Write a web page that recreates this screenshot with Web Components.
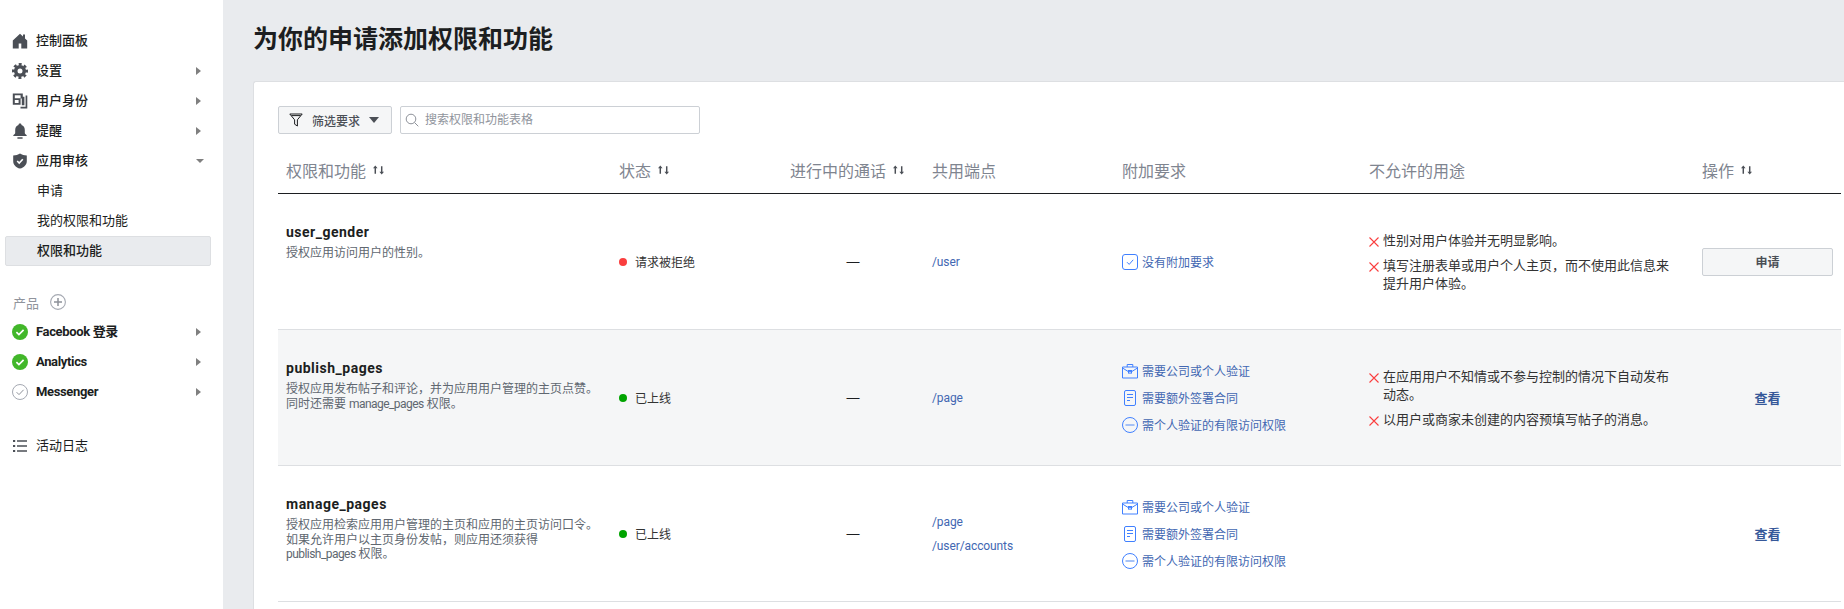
<!DOCTYPE html>
<html lang="zh">
<head>
<meta charset="utf-8">
<title>权限和功能</title>
<style>
    html, body {
        margin: 0;
        height: 100%;
        overflow: hidden;
        background: #e9ebee;
        color: #1c1e21;
        font-family: Roboto, "Noto Sans CJK SC", sans-serif;
    }
    body {
        display: flex;
    }
</style>
</head>
<body>
<app-sidebar>
    <nav-group>
        <nav-item icon="home" strong>控制面板</nav-item>
        <nav-item icon="gear" strong chevron="right">设置</nav-item>
        <nav-item icon="identity" strong chevron="right">用户身份</nav-item>
        <nav-item icon="bell" strong chevron="right">提醒</nav-item>
        <nav-item icon="shield" strong chevron="down">应用审核</nav-item>
        <nav-item sub>申请</nav-item>
        <nav-item sub>我的权限和功能</nav-item>
        <nav-item sub selected>权限和功能</nav-item>
    </nav-group>
    <nav-products></nav-products>
    <nav-group>
        <nav-item icon="okfill" strong tight chevron="right">Facebook 登录</nav-item>
        <nav-item icon="okfill" strong tight chevron="right">Analytics</nav-item>
        <nav-item icon="okline" strong tight chevron="right">Messenger</nav-item>
    </nav-group>
    <nav-group class="log">
        <nav-item icon="list">活动日志</nav-item>
    </nav-group>
</app-sidebar>
<app-main>
    <span slot="title">为你的申请添加权限和功能</span>
    <filter-bar></filter-bar>
    <perm-head></perm-head>
    <perm-row>
        <perm-info slot="info" name="user_gender">授权应用访问用户的性别。</perm-info>
        <status-dot slot="status" color="#fa3e3e">请求被拒绝</status-dot>
        <end-point slot="endpoints">/user</end-point>
        <req-item slot="reqs" icon="check">没有附加要求</req-item>
        <ban-item slot="bans">性别对用户体验并无明显影响。</ban-item>
        <ban-item slot="bans">填写注册表单或用户个人主页，而不使用此信息来提升用户体验。</ban-item>
        <action-button slot="action">申请</action-button>
    </perm-row>
    <perm-row shaded>
        <perm-info slot="info" name="publish_pages">授权应用发布帖子和评论，并为应用用户管理的主页点赞。<br>同时还需要 <perm-word>manage_pages</perm-word> 权限。</perm-info>
        <status-dot slot="status" color="#00a400">已上线</status-dot>
        <end-point slot="endpoints">/page</end-point>
        <req-item slot="reqs" icon="case">需要公司或个人验证</req-item>
        <req-item slot="reqs" icon="doc">需要额外签署合同</req-item>
        <req-item slot="reqs" icon="minus">需个人验证的有限访问权限</req-item>
        <ban-item slot="bans">在应用用户不知情或不参与控制的情况下自动发布动态。</ban-item>
        <ban-item slot="bans">以用户或商家未创建的内容预填写帖子的消息。</ban-item>
        <action-link slot="action">查看</action-link>
    </perm-row>
    <perm-row>
        <perm-info slot="info" name="manage_pages">授权应用检索应用用户管理的主页和应用的主页访问口令。如果允许用户以主页身份发帖，则应用还须获得<br><perm-word>publish_pages</perm-word> 权限。</perm-info>
        <status-dot slot="status" color="#00a400">已上线</status-dot>
        <end-point slot="endpoints">/page</end-point>
        <end-point slot="endpoints">/user/accounts</end-point>
        <req-item slot="reqs" icon="case">需要公司或个人验证</req-item>
        <req-item slot="reqs" icon="doc">需要额外签署合同</req-item>
        <req-item slot="reqs" icon="minus">需个人验证的有限访问权限</req-item>
        <action-link slot="action">查看</action-link>
    </perm-row>
</app-main>

<script>
const ICONS = {
    home: `<path fill="#4b4f56" d="M8 .8 .8 7.4V15.500h5.900v-5h2.600v5h5.900V7.400l-2.200-2V1.500h-2v2.100z"/>`,
    gear: `<circle cx="8" cy="8" r="4.3" fill="none" stroke="#4b4f56" stroke-width="3.6"/><circle cx="8" cy="8" r="6.7" fill="none" stroke="#4b4f56" stroke-width="2.6" stroke-dasharray="2.9 2.36" stroke-dashoffset="1.45"/>`,
    identity: `<path fill="#4b4f56" fill-rule="evenodd" d="M.8.5h10v3.300h1.600v8.400H9.800V5.600H8.600v6.200H.8zm2 1.700v3h5.800v-3zm0 4.800v3.100h3.800V7z"/><path fill="#4b4f56" d="M13.600 2.500h1.700v13H8.500v-1.700h5.100z"/>`,
    bell: `<path fill="#4b4f56" d="M8 .6c.9 0 1.400.5 1.500 1.300 2.100.6 3.300 2.500 3.300 5v3.200c0 .8.7 1.300 1.900 2.100v.9H1.300v-.9c1.200-.8 1.900-1.300 1.900-2.100V6.900c0-2.500 1.200-4.400 3.300-5C6.600 1.100 7.100.6 8 .6z"/><rect x="5.200" y="14.200" width="5.600" height="1.600" rx=".8" fill="#4b4f56"/>`,
    shield: `<path fill="#4b4f56" d="M8 .4c1.900 1.300 4.100 1.900 6.800 2v5.800c0 3.500-2.700 6.200-6.800 7.400-4.100-1.200-6.800-3.900-6.800-7.400V2.400C3.900 2.300 6.100 1.700 8 .4z"/><path fill="none" stroke="#fff" stroke-width="1.600" d="m5.200 8 2 2 3.600-3.800"/>`,
    okfill: `<circle cx="8" cy="8" r="8" fill="#42b72a"/><path fill="none" stroke="#fff" stroke-width="1.700" d="m4.400 8.200 2.500 2.400 4.700-4.800"/>`,
    okline: `<circle cx="8" cy="8" r="7.500" fill="none" stroke="#a5a9b2"/><path fill="none" stroke="#8d9199" d="m4.600 8.200 2.400 2.400 4.600-4.800"/>`,
    list: `<path fill="#4b4f56" d="M1 2h2.200v2H1zm4 .2h10v1.600H5zM1 7h2.200v2H1zm4 .2h10v1.600H5zM1 12h2.200v2H1zm4 .2h10v1.600H5z"/>`,
    plus: `<circle cx="8" cy="8" r="7.400" fill="none" stroke="#a5a9b2" stroke-width="1.100"/><path fill="none" stroke="#8d9199" stroke-width="1.500" d="M8 4v8M4 8h8"/>`,
    check: `<rect x=".5" y=".5" width="15" height="15" rx="2.500" fill="none" stroke="#4080ff"/><path fill="none" stroke="#4080ff" d="m5 8.200 2.200 2.200 4-4.600"/>`,
    case: `<path fill="none" stroke="#4080ff" d="M.5 4h15v11H.5zM5.200 4V1.500h5.600V4M.5 5 6 8.400h4L15.500 5"/><rect x="6.500" y="7.500" width="3" height="2.600" fill="none" stroke="#4080ff"/>`,
    doc: `<rect x="2.500" y=".5" width="11" height="15" rx="1.500" fill="none" stroke="#4080ff"/><path fill="none" stroke="#4080ff" d="M5 4.500h6M5 7.500h6M5 10.500h3"/>`,
    minus: `<circle cx="8" cy="8" r="7.500" fill="none" stroke="#4080ff"/><path fill="none" stroke="#8fb3f5" stroke-width="1.600" d="M3.500 8h9"/>`
};

function svgIcon(name) {
    return `<svg width="16" height="16" viewBox="0 0 16 16">${ICONS[name] || ""}</svg>`;
}

class Base extends HTMLElement {
    constructor() {
        super();
        this.shadowDOM = this.attachShadow({ mode: "open" });
    }

    connectedCallback() {
        this.render();
    }
}

class AppSidebar extends Base {
    render() {
        this.shadowDOM.innerHTML = `
        <style>
            :host {
                display: block;
                flex: 0 0 223px;
                box-sizing: border-box;
                padding-top: 26px;
                background: #fff;
            }
        </style>
        <slot></slot>`;
    }
}

class NavGroup extends Base {
    render() {
        this.shadowDOM.innerHTML = `
        <style>
            :host {
                display: block;
            }
            :host(.log) {
                margin-top: 24px;
            }
        </style>
        <slot></slot>`;
    }
}

class NavItem extends Base {
    render() {
        const icon = this.getAttribute("icon");
        const chevron = this.getAttribute("chevron");
        this.shadowDOM.innerHTML = `
        <style>
            :host {
                display: block;
                height: 30px;
                font-size: 13px;
            }
            .row {
                height: 30px;
                box-sizing: border-box;
                display: flex;
                align-items: center;
                padding: 0 22px 0 12px;
                width: 223px;
            }
            .icon {
                flex: 0 0 16px;
                height: 16px;
                margin-right: 8px;
            }
            .icon svg {
                display: block;
            }
            .label {
                flex: 1;
                line-height: 30px;
                white-space: nowrap;
            }
            :host([strong]) .label {
                font-weight: 500;
            }
            :host([tight]) .label {
                font-weight: 700;
                letter-spacing: -.35px;
            }
            :host([sub]) .row {
                padding-left: 37px;
            }
            :host([selected]) .row {
                width: 206px;
                margin-left: 5px;
                padding-left: 31px;
                background: #e9ebee;
                border: 1px solid #dddfe2;
                border-radius: 2px;
            }
            :host([selected]) .label {
                font-weight: 500;
            }
            .right {
                width: 0;
                height: 0;
                border-left: 5px solid #7f7f7f;
                border-top: 4px solid transparent;
                border-bottom: 4px solid transparent;
            }
            .down {
                width: 0;
                height: 0;
                margin-right: -3px;
                border-top: 4px solid #7f7f7f;
                border-left: 4px solid transparent;
                border-right: 4px solid transparent;
            }
        </style>
        <div class="row">
            ${icon ? `<span class="icon">${svgIcon(icon)}</span>` : ""}
            <span class="label"><slot></slot></span>
            ${chevron ? `<span class="${chevron}"></span>` : ""}
        </div>`;
    }
}

class NavProducts extends Base {
    render() {
        this.shadowDOM.innerHTML = `
        <style>
            :host {
                display: flex;
                align-items: center;
                gap: 11px;
                height: 51px;
                box-sizing: border-box;
                padding: 21px 0 0 13px;
                font-size: 13px;
                color: #90949c;
            }
            svg {
                display: block;
            }
        </style>
        <span>产品</span>${svgIcon("plus")}`;
    }
}

class AppMain extends Base {
    render() {
        this.shadowDOM.innerHTML = `
        <style>
            :host {
                display: flex;
                flex-direction: column;
                flex: 1;
                min-width: 0;
                padding-left: 30px;
            }
            h1 {
                margin: 0;
                height: 81px;
                font-size: 25px;
                font-weight: 700;
                line-height: 80px;
                color: #1c1e21;
            }
            .card {
                flex: 1;
                padding: 24px 3px 0 24px;
                background: #fff;
                border: solid #dddfe2;
                border-width: 1px 0 0 1px;
                border-radius: 3px 0 0 0;
            }
        </style>
        <h1><slot name="title"></slot></h1>
        <div class="card"><slot></slot></div>`;
    }
}

class FilterBar extends Base {
    render() {
        this.shadowDOM.innerHTML = `
        <style>
            :host {
                display: flex;
                gap: 8px;
                height: 28px;
                font-size: 12px;
            }
            button {
                display: flex;
                align-items: center;
                width: 114px;
                padding: 0 0 0 10px;
                font: inherit;
                font-weight: 500;
                color: #4b4f56;
                background: #f5f6f7;
                border: 1px solid #ccd0d5;
                border-radius: 2px;
            }
            button svg {
                margin-right: 9px;
            }
            .caret {
                margin-left: 9px;
                border-top: 6px solid #4b4f56;
                border-left: 5.5px solid transparent;
                border-right: 5.5px solid transparent;
            }
            .search {
                display: flex;
                align-items: center;
                box-sizing: border-box;
                width: 300px;
                padding-left: 4px;
                border: 1px solid #ccd0d5;
                border-radius: 2px;
            }
            .search svg {
                margin-right: 6px;
            }
            input {
                flex: 1;
                min-width: 0;
                padding: 0;
                border: 0;
                outline: 0;
                font: inherit;
                background: none;
            }
            input::placeholder {
                color: #90949c;
                opacity: 1;
            }
        </style>
        <button type="button">
            <svg width="14" height="14" viewBox="0 0 14 14"><path fill="none" stroke="#1c1e21" d="M.8 1h12.400L8.400 6.800V13L5.600 11.200V6.800zM2.400 2.600h9.200"/></svg>
            筛选要求<span class="caret"></span>
        </button>
        <label class="search">
            <svg width="14" height="14" viewBox="0 0 14 14"><circle cx="6" cy="6" r="4.800" fill="none" stroke="#8d9199"/><path stroke="#8d9199" d="m9.500 9.500 3.800 3.800"/></svg>
            <input type="text" placeholder="搜索权限和功能表格">
        </label>`;
    }
}

// shared column widths of the header and the rows
const COLS = "333px 171px 142px 190px 247px 333px 147px";

const SORT = `<svg class="sort" width="11" height="10" viewBox="0 0 12 10"><path fill="#4b4f56" d="M2.500 0 5 3.200H3.300V9H1.700V3.200H0zM9.500 10 7 6.800h1.700V1h1.600v5.800H12z"/></svg>`;

class PermHead extends Base {
    render() {
        const cols = [["权限和功能", 1], ["状态", 1], ["进行中的通话", 1], ["共用端点", 0], ["附加要求", 0], ["不允许的用途", 0], ["操作", 1]];
        this.shadowDOM.innerHTML = `
        <style>
            :host {
                display: grid;
                grid-template-columns: ${COLS};
                height: 60px;
                box-sizing: border-box;
                border-bottom: 1px solid #1c1e21;
                font-size: 16px;
                color: #7f8590;
            }
            div {
                display: flex;
                align-items: center;
                gap: 7px;
                padding: 12px 8px 0;
                white-space: nowrap;
            }
        </style>
        ${cols.map(([label, sortable]) => `<div>${label}${sortable ? SORT : ""}</div>`).join("")}`;
    }
}

class PermRow extends Base {
    render() {
        this.shadowDOM.innerHTML = `
        <style>
            :host {
                display: grid;
                grid-template-columns: ${COLS};
                height: 136px;
                box-sizing: border-box;
                border-bottom: 1px solid #dddfe2;
            }
            :host([shaded]) {
                background: #f5f6f7;
            }
            .cell {
                display: flex;
                flex-direction: column;
                justify-content: center;
                padding: 0 8px;
                min-width: 0;
            }
            .calls {
                align-items: center;
                font-family: "Liberation Sans", sans-serif;
                font-size: 13px;
                color: #1c1e21;
            }
            .info {
                justify-content: flex-start;
                padding-top: 28px;
            }
            .bans {
                gap: 7px;
                padding-top: 2px;
            }
            .reqs {
                gap: 7px;
            }
            .eps {
                gap: 8px;
            }
        </style>
        <div class="cell info"><slot name="info"></slot></div>
        <div class="cell"><slot name="status"></slot></div>
        <div class="cell calls">—</div>
        <div class="cell eps"><slot name="endpoints"></slot></div>
        <div class="cell reqs"><slot name="reqs"></slot></div>
        <div class="cell bans"><slot name="bans"></slot></div>
        <div class="cell"><slot name="action"></slot></div>`;
    }
}

class PermInfo extends Base {
    render() {
        this.shadowDOM.innerHTML = `
        <style>
            :host {
                display: block;
            }
            b {
                display: block;
                font-size: 14px;
                font-weight: 700;
                line-height: 20px;
                letter-spacing: .5px;
                color: #1c1e21;
            }
            p {
                margin: 4px 0 0;
                font-size: 12px;
                line-height: 14.5px;
                color: #606770;
            }
        </style>
        <b>${this.getAttribute("name")}</b>
        <p><slot></slot></p>`;
    }
}

class PermWord extends Base {
    render() {
        this.shadowDOM.innerHTML = `
        <style>
            :host {
                display: inline;
                letter-spacing: -.55px;
            }
        </style>
        <slot></slot>`;
    }
}

class StatusDot extends Base {
    render() {
        this.shadowDOM.innerHTML = `
        <style>
            :host {
                display: flex;
                align-items: center;
                gap: 8px;
                font-size: 12px;
                color: #333;
            }
            i {
                width: 8px;
                height: 8px;
                border-radius: 50%;
                background: ${this.getAttribute("color")};
            }
        </style>
        <i></i><span><slot></slot></span>`;
    }
}

class EndPoint extends Base {
    render() {
        this.shadowDOM.innerHTML = `
        <style>
            :host {
                display: block;
                font-size: 12px;
                line-height: 16px;
                letter-spacing: -.1px;
                color: #4267b2;
            }
        </style>
        <slot></slot>`;
    }
}

class ReqItem extends Base {
    render() {
        this.shadowDOM.innerHTML = `
        <style>
            :host {
                display: flex;
                align-items: center;
                gap: 4px;
                height: 20px;
                font-size: 12px;
                color: #4267b2;
                white-space: nowrap;
            }
            svg {
                display: block;
            }
        </style>
        ${svgIcon(this.getAttribute("icon"))}<span><slot></slot></span>`;
    }
}

class BanItem extends Base {
    render() {
        this.shadowDOM.innerHTML = `
        <style>
            :host {
                display: flex;
                gap: 4px;
                width: 304px;
                font-size: 13px;
                line-height: 18px;
                color: #333;
            }
            svg {
                flex: none;
                margin-top: 5px;
            }
        </style>
        <svg width="10" height="10" viewBox="0 0 10 10"><path fill="none" stroke="#fa3e3e" stroke-width="1.100" d="m.5.5 9 9m0-9-9 9"/></svg>
        <span><slot></slot></span>`;
    }
}

class ActionButton extends Base {
    render() {
        this.shadowDOM.innerHTML = `
        <style>
            :host {
                display: block;
            }
            button {
                display: block;
                width: 131px;
                height: 28px;
                padding: 0;
                font: inherit;
                font-size: 12px;
                font-weight: 700;
                color: #4b4f56;
                background: #f5f6f7;
                border: 1px solid #ccd0d5;
                border-radius: 2px;
            }
        </style>
        <button type="button"><slot></slot></button>`;
    }
}

class ActionLink extends Base {
    render() {
        this.shadowDOM.innerHTML = `
        <style>
            :host {
                display: block;
                width: 131px;
                text-align: center;
                font-size: 13px;
                font-weight: 700;
                color: #365899;
            }
        </style>
        <slot></slot>`;
    }
}

customElements.define("app-sidebar", AppSidebar);
customElements.define("nav-group", NavGroup);
customElements.define("nav-item", NavItem);
customElements.define("nav-products", NavProducts);
customElements.define("app-main", AppMain);
customElements.define("filter-bar", FilterBar);
customElements.define("perm-head", PermHead);
customElements.define("perm-row", PermRow);
customElements.define("perm-info", PermInfo);
customElements.define("perm-word", PermWord);
customElements.define("status-dot", StatusDot);
customElements.define("end-point", EndPoint);
customElements.define("req-item", ReqItem);
customElements.define("ban-item", BanItem);
customElements.define("action-button", ActionButton);
customElements.define("action-link", ActionLink);
</script>
</body>
</html>
